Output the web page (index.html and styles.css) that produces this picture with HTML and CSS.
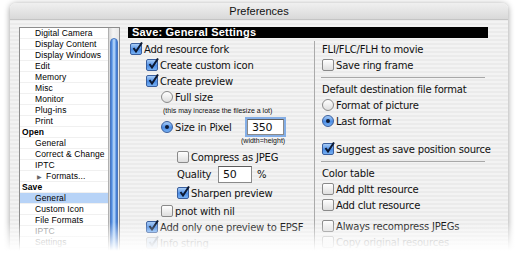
FILE: index.html
```html
<!DOCTYPE html>
<html lang="en">

<head>
    <meta charset="UTF-8">
    <title>Preferences</title>
    <link rel="stylesheet" href="styles.css">
</head>

<body>
    <div class="window">
        <div class="titlebar">Preferences</div>
        <div class="content">
            <div class="sidebar">
                <ul class="list">
                    <li class="item">Digital Camera</li>
                    <li class="item">Display Content</li>
                    <li class="item">Display Windows</li>
                    <li class="item">Edit</li>
                    <li class="item">Memory</li>
                    <li class="item">Misc</li>
                    <li class="item">Monitor</li>
                    <li class="item">Plug-ins</li>
                    <li class="item">Print</li>
                    <li class="group">Open</li>
                    <li class="item">General</li>
                    <li class="item">Correct &amp; Change</li>
                    <li class="item">IPTC</li>
                    <li class="item sub"><span class="tri">&#9654;</span>Formats...</li>
                    <li class="group">Save</li>
                    <li class="item selected">General</li>
                    <li class="item">Custom Icon</li>
                    <li class="item">File Formats</li>
                    <li class="item dim">IPTC</li>
                    <li class="item dim">Settings</li>
                </ul>
                <div class="scrollbar">
                    <div class="thumb"></div>
                </div>
            </div>

            <div class="main">
                <div class="heading">Save: General Settings</div>
                <div class="columns">
                    <div class="col-left">
                        <div class="row"><span class="cb on"><svg viewBox="0 0 12 12"><path d="M2.5 6 L5 9.5 L11 0.5"/></svg></span>Add resource fork</div>
                        <div class="row lvl1"><span class="cb on"><svg viewBox="0 0 12 12"><path d="M2.5 6 L5 9.5 L11 0.5"/></svg></span>Create custom icon</div>
                        <div class="row lvl1"><span class="cb on"><svg viewBox="0 0 12 12"><path d="M2.5 6 L5 9.5 L11 0.5"/></svg></span>Create preview</div>
                        <div class="row lvl2"><span class="rb"></span>Full size</div>
                        <div class="note">(this may increase the filesize a lot)</div>
                        <div class="row lvl2 tall"><span class="rb on"></span><span class="label-pixel">Size in Pixel</span><span class="field focus">350</span></div>
                        <div class="note note-right">(width=height)</div>
                        <div class="row lvl3 compress"><span class="cb"></span>Compress as JPEG</div>
                        <div class="row lvl3 quality"><span class="label-quality">Quality</span><span class="field small">50</span><span class="pct">%</span></div>
                        <div class="row lvl3 after"><span class="cb on"><svg viewBox="0 0 12 12"><path d="M2.5 6 L5 9.5 L11 0.5"/></svg></span>Sharpen preview</div>
                        <div class="row lvl2 after"><span class="cb"></span>pnot with nil</div>
                        <div class="row lvl1"><span class="cb on"><svg viewBox="0 0 12 12"><path d="M2.5 6 L5 9.5 L11 0.5"/></svg></span>Add only one preview to EPSF</div>
                        <div class="row lvl1 disabled"><span class="cb on"><svg viewBox="0 0 12 12"><path d="M2.5 6 L5 9.5 L11 0.5"/></svg></span>Info string</div>
                    </div>

                    <div class="col-right">
                        <div class="row">FLI/FLC/FLH to movie</div>
                        <div class="row"><span class="cb"></span>Save ring frame</div>
                        <div class="sep"></div>
                        <div class="row">Default destination file format</div>
                        <div class="row"><span class="rb"></span>Format of picture</div>
                        <div class="row"><span class="rb on"></span>Last format</div>
                        <div class="row suggest"><span class="cb on"><svg viewBox="0 0 12 12"><path d="M2.5 6 L5 9.5 L11 0.5"/></svg></span>Suggest as save position source</div>
                        <div class="sep"></div>
                        <div class="row">Color table</div>
                        <div class="row"><span class="cb"></span>Add pltt resource</div>
                        <div class="row"><span class="cb"></span>Add clut resource</div>
                        <div class="row always"><span class="cb"></span>Always recompress JPEGs</div>
                        <div class="row disabled"><span class="cb"></span>Copy original resources</div>
                    </div>
                </div>
            </div>
        </div>
    </div>
    <div class="fade"></div>
</body>

</html>
```

FILE: styles.css
```css
body {
    margin: 0;
    width: 520px;
    height: 258px;
    overflow: hidden;
    position: relative;
    background: white;
    font-family: "DejaVu Sans", sans-serif;
    font-size: 10px;
    letter-spacing: -0.2px;
    color: #111;
}

.window {
    margin: 3px 0 0 10px;
    width: 498px;
    height: 255px;
    overflow: hidden;
    border-radius: 6px 6px 0 0;
    background: repeating-linear-gradient(#ebebeb 0 2px, #f3f3f3 2px 4px);
    box-shadow: 0 1px 6px rgba(0, 0, 0, 0.4);
}

.titlebar {
    height: 17px;
    line-height: 16px;
    text-align: center;
    font-family: "Liberation Sans", sans-serif;
    font-size: 11px;
    letter-spacing: 0;
    border-radius: 6px 6px 0 0;
    background: linear-gradient(#f0f0f0, #d9d9d9);
    border-bottom: 1px solid #c4c4c4;
    box-sizing: border-box;
}

.content {
    display: flex;
    padding: 7px 0 0 9px;
}

/* left list */
.sidebar {
    display: flex;
    width: 101px;
    height: 240px;
    border: 1px solid #8d8d8d;
    box-sizing: border-box;
    background: white;
}

.list {
    list-style: none;
    margin: 0;
    padding: 0;
    width: 88px;
    font-family: "Liberation Sans", sans-serif;
    font-size: 8.5px;
    letter-spacing: 0.1px;
    color: #000;
}

.list li {
    height: 11px;
    line-height: 10px;
    border-bottom: 1px solid #f0f0f0;
    box-sizing: border-box;
    white-space: nowrap;
}

.item {
    padding-left: 15px;
}

.group {
    padding-left: 2px;
    font-weight: bold;
}

.sub .tri {
    font-size: 6px;
    color: #666;
    margin: 0 4px 0 2px;
}

.selected {
    background: #b7d3f7;
}

.dim {
    color: #888;
}

.scrollbar {
    width: 11px;
    border-left: 1px solid #b0b0b0;
    background: linear-gradient(to right, #d8d8d8, #f4f4f4 40%, #e8e8e8);
    padding: 10px 1px 0 1px;
    box-sizing: border-box;
}

.thumb {
    height: 230px;
    border-radius: 5px 5px 0 0;
    border: 1px solid #4a78c0;
    background: linear-gradient(to right, #3c76d2, #7fb2f0 30%, #c4ddfa 50%, #7fb2f0 70%, #2f69c8);
}

/* right pane */
.main {
    margin-left: 8px;
    width: 360px;
}

.heading {
    height: 11px;
    line-height: 11px;
    background: black;
    color: white;
    font-family: "Liberation Sans", sans-serif;
    font-weight: bold;
    font-size: 11px;
    letter-spacing: 0.2px;
    padding-left: 4px;
}

.columns {
    display: flex;
    padding-top: 3px;
}

.col-left {
    width: 184px;
    padding-left: 2px;
    border-right: 1px solid #aaaaaa;
}

.col-right {
    width: 166px;
    padding-left: 7px;
}

.row {
    display: flex;
    align-items: center;
    height: 16px;
    white-space: nowrap;
}

.lvl1 { padding-left: 16px; }
.lvl2 { padding-left: 31px; }
.lvl3 { padding-left: 47px; }

.tall { height: 20px; }
.compress { margin-top: 4px; }
.quality { height: 18px; }
.after { margin-top: 2px; }
.suggest { margin-top: 12px; }
.always { margin-top: 5px; }

.disabled {
    color: #999;
}

.note {
    height: 12px;
    line-height: 12px;
    padding-left: 33px;
    font-family: "Liberation Sans", sans-serif;
    font-size: 7px;
    letter-spacing: 0;
}

.note-right {
    height: 8px;
    line-height: 8px;
    padding-left: 111px;
}

.sep {
    height: 1px;
    margin: 4px 3px 3px -1px;
    background: #a8a8a8;
}

/* controls */
.cb, .rb {
    flex: none;
    position: relative;
    width: 12px;
    height: 12px;
    margin-right: 2px;
    box-sizing: border-box;
    border: 1px solid #8a8a8a;
    background: linear-gradient(#ffffff, #dedede);
}

.cb {
    border-radius: 2px;
}

.rb {
    border-radius: 50%;
}

.cb.on, .rb.on {
    border-color: #3a5f9e;
    background: linear-gradient(#a9cdf7, #4d8ee6 55%, #77b0f2);
}

.cb svg {
    position: absolute;
    left: 0;
    top: -2px;
    width: 12px;
    height: 12px;
    fill: none;
    stroke: #0d1a33;
    stroke-width: 2;
}

.rb.on::after {
    content: "";
    position: absolute;
    left: 3px;
    top: 3px;
    width: 4px;
    height: 4px;
    border-radius: 50%;
    background: #0d1a33;
}

.disabled .cb {
    border-color: #b8b8b8;
    background: linear-gradient(#fafafa, #e8e8e8);
}

.disabled .cb.on {
    background: linear-gradient(#dbe6f3, #b9cde6);
}

.disabled .cb svg {
    stroke: #9aa4b3;
}

.label-pixel {
    width: 72px;
}

.field {
    width: 37px;
    height: 16px;
    line-height: 15px;
    padding-left: 4px;
    box-sizing: border-box;
    background: white;
    border: 1px solid #8a8a8a;
    border-top-color: #5c5c5c;
    font-size: 11px;
}

.field.focus {
    box-shadow: 0 0 0 2px #84aee6;
}

.label-quality {
    width: 41px;
}

.field.small {
    width: 34px;
    height: 17px;
}

.pct {
    margin-left: 5px;
}

.fade {
    position: absolute;
    left: 0;
    right: 0;
    top: 222px;
    bottom: 0;
    background: linear-gradient(rgba(255, 255, 255, 0), white 80%);
}
```
